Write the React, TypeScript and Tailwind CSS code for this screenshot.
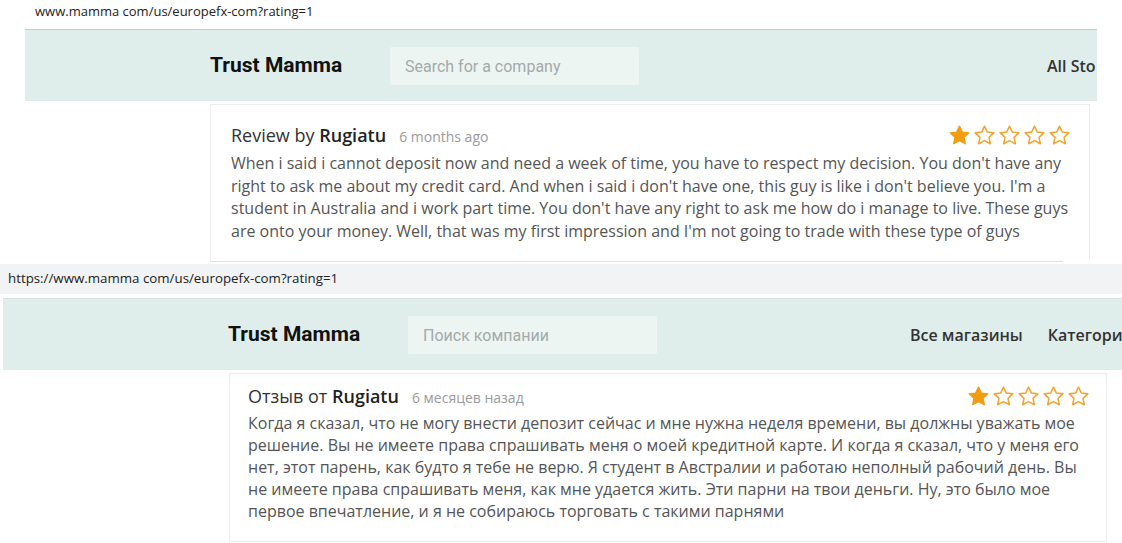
const STAR = 'M12 2.2l2.95 6.2 6.75.85-4.95 4.65 1.3 6.7L12 17.3l-6.05 3.3 1.3-6.7L2.3 9.25l6.75-.85z';

function Stars({ rating }: { rating: number }) {
  return (
    <div className="flex items-center gap-[2px]">
      {[1, 2, 3, 4, 5].map((i) => (
        <svg key={i} viewBox="0 0 24 24" className="h-[23px] w-[23px]" aria-hidden="true">
          {i <= rating ? (
            <path d={STAR} fill="#f39c12" stroke="#f39c12" strokeWidth={1.4} strokeLinejoin="round" />
          ) : (
            <path d={STAR} fill="none" stroke="#f3a530" strokeWidth={1.6} strokeLinejoin="round" />
          )}
        </svg>
      ))}
    </div>
  );
}

function Header({ search, links, className }: { search: string; links: string[]; className: string }) {
  return (
    <div className={`flex h-[72px] items-center overflow-hidden whitespace-nowrap border-t border-[#c3cecb] bg-[#dfeeea] ${className}`}>
      <span className="w-[130px] shrink-0 font-['Roboto',sans-serif] text-[21px] font-bold text-[#111]">
        Trust Mamma
      </span>
      <div className="ml-[50px] flex h-[38px] w-[249px] shrink-0 items-center rounded-[2px] bg-[#edf5f3] pl-[15px] pt-[2px] font-['Roboto',sans-serif] text-[16px] text-[#a3aaa8]">
        {search}
      </div>
      <nav className="flex shrink-0 gap-[25px] font-['Open_Sans',sans-serif] text-[16px] font-semibold text-[#333]">
        {links.map((l) => (
          <span key={l}>{l}</span>
        ))}
      </nav>
    </div>
  );
}

interface ReviewProps {
  label: string;
  author: string;
  when: string;
  body: string;
}

function ReviewHead({ label, author, when }: Omit<ReviewProps, 'body'>) {
  return (
    <div className="flex items-center justify-between">
      <div className="flex items-baseline font-['Open_Sans',sans-serif]">
        <span className="text-[18px] text-[#333]">{label}&nbsp;</span>
        <span className="text-[18px] font-semibold text-[#222]">{author}</span>
        <span className="ml-[13px] text-[14px] text-[#9a9a9a]">{when}</span>
      </div>
      <Stars rating={1} />
    </div>
  );
}

export default function App() {
  const en: ReviewProps = {
    label: 'Review by',
    author: 'Rugiatu',
    when: '6 months ago',
    body: "When i said i cannot deposit now and need a week of time, you have to respect my decision. You don't have any right to ask me about my credit card. And when i said i don't have one, this guy is like i don't believe you. I'm a student in Australia and i work part time. You don't have any right to ask me how do i manage to live. These guys are onto your money. Well, that was my first impression and I'm not going to trade with these type of guys",
  };
  const ru: ReviewProps = {
    label: 'Отзыв от',
    author: 'Rugiatu',
    when: '6 месяцев назад',
    body: 'Когда я сказал, что не могу внести депозит сейчас и мне нужна неделя времени, вы должны уважать мое решение. Вы не имеете права спрашивать меня о моей кредитной карте. И когда я сказал, что у меня его нет, этот парень, как будто я тебе не верю. Я студент в Австралии и работаю неполный рабочий день. Вы не имеете права спрашивать меня, как мне удается жить. Эти парни на твои деньги. Ну, это было мое первое впечатление, и я не собираюсь торговать с такими парнями',
  };

  return (
    <div className="flex h-[543px] w-[1122px] flex-col overflow-hidden bg-white">
      {/* first capture */}
      <div className="h-[29px] pl-[35px] pt-[2px] font-['Open_Sans',sans-serif] text-[13px] text-[#222]">
        www.mamma com/us/europefx-com?rating=1
      </div>
      <Header search="Search for a company" links={['All Sto']} className="mx-[25px] pl-[185px] [&>nav]:ml-[408px]" />
      <div className="pl-[210px] pt-[3px]">
        <div className="h-[157px] w-[880px] border-x border-t border-[#ececec] pl-[20px] pr-[18px] pt-[17px]">
          <ReviewHead {...en} />
          <p className="mt-[3px] font-['Open_Sans',sans-serif] text-[16px] leading-[22.5px] text-[#555]">{en.body}</p>
        </div>
        <div className="h-px w-[853px] bg-[#e3e3e3]" />
      </div>

      {/* second capture */}
      <div className="mt-[2px] flex h-[30px] items-center bg-[#f1f3f4] pl-[8px] font-['Open_Sans',sans-serif] text-[13.3px] text-[#222]">
        https://www.mamma com/us/europefx-com?rating=1
      </div>
      <Header search="Поиск компании" links={['Все магазины', 'Категори']} className="ml-[3px] mt-[4px] border-[#d8e4e1] pl-[225px] [&>nav]:ml-[253px]" />
      <div className="pl-[229px] pt-[3px]">
        <div className="h-[169px] w-[878px] border border-[#ececec] pl-[18px] pr-[16px] pt-[9px]">
          <ReviewHead {...ru} />
          <p className="mt-[2px] font-['Open_Sans',sans-serif] text-[16px] leading-[22px] text-[#555]">{ru.body}</p>
        </div>
      </div>
    </div>
  );
}
